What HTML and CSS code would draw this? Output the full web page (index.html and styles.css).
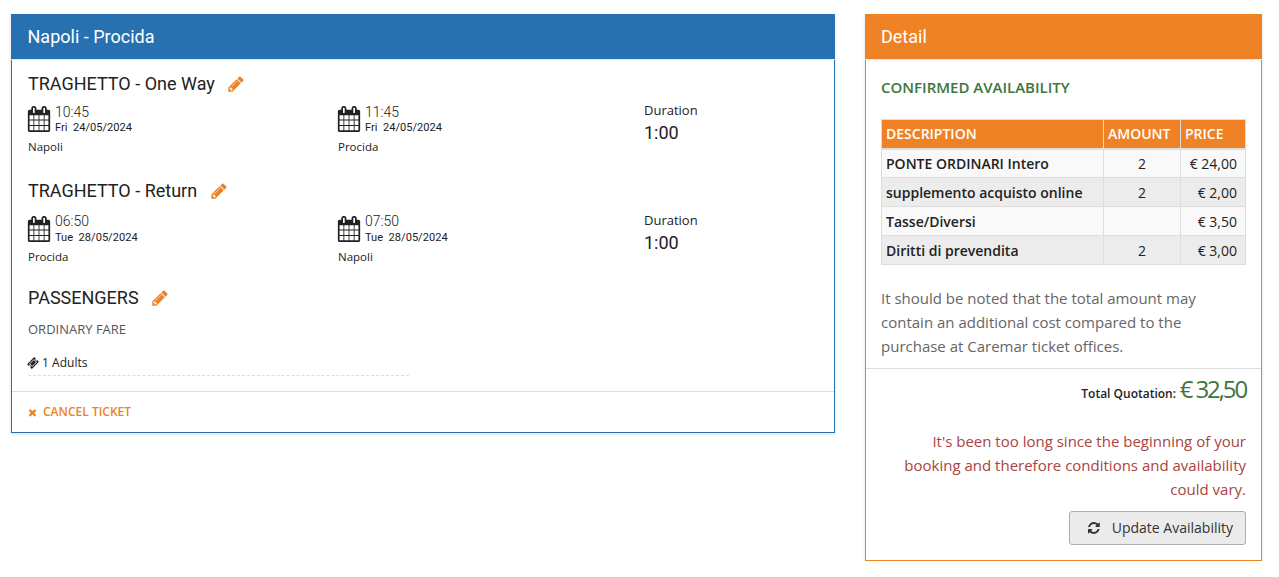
FILE: index.html
```html
<!DOCTYPE html>
<html lang="en">
<head>
<meta charset="utf-8">
<title>Napoli - Procida</title>
<link rel="stylesheet" href="styles.css">
</head>
<body>
<svg class="defs" width="0" height="0" aria-hidden="true">
  <symbol id="i-pencil" viewBox="0 0 1792 1792"><path d="M491 1536l91-91-235-235-91 91v107h128v128h107zm523-928q0-22-22-22-10 0-17 7l-542 542q-7 7-7 17 0 22 22 22 10 0 17-7l542-542q7-7 7-17zm-54-192l416 416-832 832h-416v-416zm683 96q0 53-37 90l-166 166-416-416 166-165q36-38 90-38 53 0 91 38l235 234q37 39 37 91z"/></symbol>
  <symbol id="i-cal" viewBox="0 0 1792 1792" preserveAspectRatio="none"><path d="M192 1664h288v-288h-288v288zm352 0h320v-288h-320v288zm-352-352h288v-320h-288v320zm352 0h320v-320h-320v320zm-352-384h288v-288h-288v288zm736 736h320v-288h-320v288zm-384-736h320v-288h-320v288zm768 736h288v-288h-288v288zm-384-352h320v-320h-320v320zm-352-864v-288q0-13-9.5-22.5t-22.5-9.5h-64q-13 0-22.5 9.5t-9.5 22.5v288q0 13 9.5 22.5t22.5 9.5h64q13 0 22.5-9.5t9.5-22.5zm736 864h288v-320h-288v320zm-384-384h320v-288h-320v288zm384 0h288v-288h-288v288zm32-480v-288q0-13-9.5-22.5t-22.5-9.5h-64q-13 0-22.5 9.5t-9.5 22.5v288q0 13 9.5 22.5t22.5 9.5h64q13 0 22.5-9.5t9.5-22.5zm384-64v1280q0 52-38 90t-90 38h-1408q-52 0-90-38t-38-90v-1280q0-52 38-90t90-38h128v-96q0-66 47-113t113-47h64q66 0 113 47t47 113v96h384v-96q0-66 47-113t113-47h64q66 0 113 47t47 113v96h128q52 0 90 38t38 90z"/></symbol>
  <symbol id="i-times" viewBox="0 0 1792 1792"><path d="M1490 1322q0 40-28 68l-136 136q-28 28-68 28t-68-28l-294-294-294 294q-28 28-68 28t-68-28l-136-136q-28-28-28-68t28-68l294-294-294-294q-28-28-28-68t28-68l136-136q28-28 68-28t68 28l294 294 294-294q28-28 68-28t68 28l136 136q28 28 28 68t-28 68l-294 294 294 294q28 28 28 68z"/></symbol>
  <symbol id="i-refresh" viewBox="0 0 1792 1792"><path d="M1639 1056q0 5-1 7-64 268-268 434.5t-478 166.5q-146 0-282.5-55t-243.5-157l-129 129q-19 19-45 19t-45-19-19-45v-448q0-26 19-45t45-19h448q26 0 45 19t19 45-19 45l-137 137q71 66 161 102t187 36q134 0 250-65t186-179q11-17 53-117 8-23 30-23h192q13 0 22.5 9.5t9.5 22.5zm25-800v448q0 26-19 45t-45 19h-448q-26 0-45-19t-19-45 19-45l138-138q-148-137-349-137-134 0-250 65t-186 179q-11 17-53 117-8 23-30 23h-199q-13 0-22.5-9.5t-9.5-22.5v-7q65-268 270-434.5t480-166.5q146 0 284 55.5t245 156.5l130-129q19-19 45-19t45 19 19 45z"/></symbol>
  <symbol id="i-ticket" viewBox="0 0 1792 1792"><path d="M1024 452l316 316-572 572-316-316zm-211 979l618-618q19-19 19-45t-19-45l-362-362q-18-18-45-18t-45 18l-618 618q-19 19-19 45t19 45l362 362q18 18 45 18t45-18zm889-637l-907 908q-37 37-90.5 37t-90.5-37l-126-126q56-56 56-136t-56-136-136-56-136 56l-125-126q-37-37-37-90.5t37-90.5l907-906q37-37 90.5-37t90.5 37l125 125q-56 56-56 136t56 136 136 56 136-56l126 125q37 37 37 90.5t-37 90.5z"/></symbol>
</svg>

<main class="page">
  <section class="panel panel-blue">
    <header class="panel-head">Napoli - Procida</header>
    <div class="panel-body trips">
      <h4 class="title">TRAGHETTO - One Way <svg class="pencil"><use href="#i-pencil"/></svg></h4>
      <div class="legs">
        <div class="leg">
          <div class="when"><svg class="cal"><use href="#i-cal"/></svg><div><div class="time">10:45</div><div class="date">Fri&nbsp; 24/05/2024</div></div></div>
          <div class="place">Napoli</div>
        </div>
        <div class="leg">
          <div class="when"><svg class="cal"><use href="#i-cal"/></svg><div><div class="time">11:45</div><div class="date">Fri&nbsp; 24/05/2024</div></div></div>
          <div class="place">Procida</div>
        </div>
        <div class="dur"><div class="dur-label">Duration</div><div class="dur-val">1:00</div></div>
      </div>

      <h4 class="title">TRAGHETTO - Return <svg class="pencil"><use href="#i-pencil"/></svg></h4>
      <div class="legs legs-return">
        <div class="leg">
          <div class="when"><svg class="cal"><use href="#i-cal"/></svg><div><div class="time">06:50</div><div class="date">Tue&nbsp; 28/05/2024</div></div></div>
          <div class="place">Procida</div>
        </div>
        <div class="leg">
          <div class="when"><svg class="cal"><use href="#i-cal"/></svg><div><div class="time">07:50</div><div class="date">Tue&nbsp; 28/05/2024</div></div></div>
          <div class="place">Napoli</div>
        </div>
        <div class="dur"><div class="dur-label">Duration</div><div class="dur-val">1:00</div></div>
      </div>

      <h4 class="title">PASSENGERS <svg class="pencil"><use href="#i-pencil"/></svg></h4>
      <div class="fare">ORDINARY FARE</div>
      <div class="pax"><svg class="ticket"><use href="#i-ticket"/></svg> 1 Adults</div>
    </div>
    <footer class="panel-foot"><svg class="times"><use href="#i-times"/></svg>CANCEL TICKET</footer>
  </section>

  <aside class="panel panel-orange">
    <header class="panel-head">Detail</header>
    <div class="panel-body detail">
      <div class="confirmed">CONFIRMED AVAILABILITY</div>
      <table class="costs">
        <colgroup><col class="c1"><col class="c2"><col class="c3"></colgroup>
        <thead><tr><th>DESCRIPTION</th><th>AMOUNT</th><th>PRICE</th></tr></thead>
        <tbody>
          <tr><td class="name">PONTE ORDINARI Intero</td><td class="qty">2</td><td class="price">€ 24,00</td></tr>
          <tr><td class="name">supplemento acquisto online</td><td class="qty">2</td><td class="price">€ 2,00</td></tr>
          <tr><td class="name">Tasse/Diversi</td><td class="qty"></td><td class="price">€ 3,50</td></tr>
          <tr><td class="name">Diritti di prevendita</td><td class="qty">2</td><td class="price">€ 3,00</td></tr>
        </tbody>
      </table>
      <p class="note">It should be noted that the total amount may contain an additional cost compared to the purchase at Caremar ticket offices.</p>
    </div>
    <div class="total-block">
      <div class="total"><span class="total-label">Total Quotation:</span> <span class="total-val">€ 32,50</span></div>
      <p class="warning">It's been too long since the beginning of your booking and therefore conditions and availability could vary.</p>
      <div class="actions"><button class="btn" type="button"><svg class="refresh"><use href="#i-refresh"/></svg><span class="btn-label">Update Availability</span></button></div>
    </div>
  </aside>
</main>
</body>
</html>
```
FILE: styles.css
```css
* { box-sizing: border-box; }
html, body { margin: 0; padding: 0; background: #fff; }
body { font-family: "Open Sans", sans-serif; font-size: 14px; color: #222; overflow: hidden; }
.defs { position: absolute; }

.page { display: flex; align-items: flex-start; gap: 30px; padding: 14px 17px 0 11px; }

.panel { background: #fff; border: 1px solid; box-shadow: 0 1px 3px rgba(0,0,0,.14); }
.panel-blue { width: 824px; border-color: #2771b1; }
.panel-orange { width: 397px; border-color: #ef8224; }
.panel-head { height: 46px; margin: -1px -1px 0; padding: 0 16.5px 1px; font: 400 18px/45px Roboto, sans-serif; color: #fff; border-bottom: 1px solid #dfe6ec; }
.panel-blue .panel-head { background: #2771b1; }
.panel-orange .panel-head { background: #ef8224; padding-left: 16px; }

.trips { padding: 12px 16px 15px; }
.title { margin: 0; font: 400 18px/24px Roboto, sans-serif; color: #222; }
.pencil { width: 18px; height: 18px; margin-left: 8px; vertical-align: -3px; fill: #ef8224; }

.legs { display: grid; grid-template-columns: 310px 306px 1fr; height: 83px; padding-top: 8px; }
.legs-return { padding-top: 10px; }
.when { display: flex; gap: 4px; }
.cal { width: 24px; height: 26px; margin-top: 2px; margin-left: -1px; fill: #222; flex: none; }
.legs-return .cal { margin-top: 3px; }
.time { font: 300 14px/17px Roboto, sans-serif; }
.date { font: 400 11.1px/13px Roboto, sans-serif; }
.legs-return .date { line-height: 14px; margin-top: 1px; }
.place { font-size: 11.5px; line-height: 16px; margin-top: 5px; }
.legs-return .place { margin-top: 4px; }
.dur-label { font-size: 13px; line-height: 21px; margin-top: -4px; }
.legs-return .dur-label { line-height: 22px; }
.dur-val { font: 400 18px/24px Roboto, sans-serif; }

.fare { font-size: 13px; line-height: 16px; color: #555; margin-top: 11px; }
.pax { width: 381px; margin-top: 18px; padding-bottom: 4px; font-size: 12px; line-height: 16px; border-bottom: 1px dashed #ddd; }
.ticket { width: 12px; height: 12px; margin-left: -1px; vertical-align: -2px; fill: #222; }

.panel-foot { height: 41px; padding: 0 16px; border-top: 1px solid #ddd; font-size: 12px; font-weight: 600; line-height: 39px; color: #ef8224; }
.times { width: 11px; height: 11px; margin: 0 5px 0 -1px; vertical-align: -2px; fill: #ef8224; }

.detail { padding: 16px 15px 0; }
.confirmed { font-size: 15px; font-weight: 600; line-height: 22px; color: #3c763d; }
.costs { width: 364px; margin-top: 21px; border-collapse: collapse; table-layout: fixed; font-size: 14px; }
.c1 { width: 222px; } .c2 { width: 77px; } .c3 { width: 65px; }
.costs th, .costs td { border: 1px solid #ddd; padding: 0 4px; height: 29px; }
.costs th { background: #ef8224; color: #fff; text-align: left; font-weight: 600; border-bottom-width: 2px; }
.costs tbody tr:nth-child(odd) { background: #f9f9f9; }
.costs tbody tr:nth-child(even) { background: #ececec; }
.name { font-weight: 600; color: #222; }
.qty { text-align: center; }
.costs .price { text-align: right; padding-right: 8px; }
.note { margin: 21px 0 0; font-size: 15px; line-height: 24px; color: #666; }

.total-block { margin-top: 10px; padding: 0 15px 15px; border-top: 1px solid #ddd; }
.total { text-align: right; height: 43px; line-height: 40px; }
.total-label { font-size: 12px; font-weight: 600; color: #222; }
.total-val { font-size: 24px; font-weight: 400; letter-spacing: -2.1px; color: #3c763d; }
.warning { margin: 17px 0 0; font-size: 15px; text-align: right; line-height: 24px; color: #a94442; }
.actions { display: flex; justify-content: flex-end; margin-top: 10px; }
.btn { display: flex; align-items: center; width: 177px; height: 34px; padding: 0 12px 0 17px; font: 400 14px "Open Sans", sans-serif; color: #333; white-space: nowrap; background: #ebebeb; border: 1px solid #adadad; border-radius: 3px; }
.btn-label { margin-top: -1px; }
.refresh { width: 14px; height: 14px; margin-right: 11px; fill: #333; }
```
